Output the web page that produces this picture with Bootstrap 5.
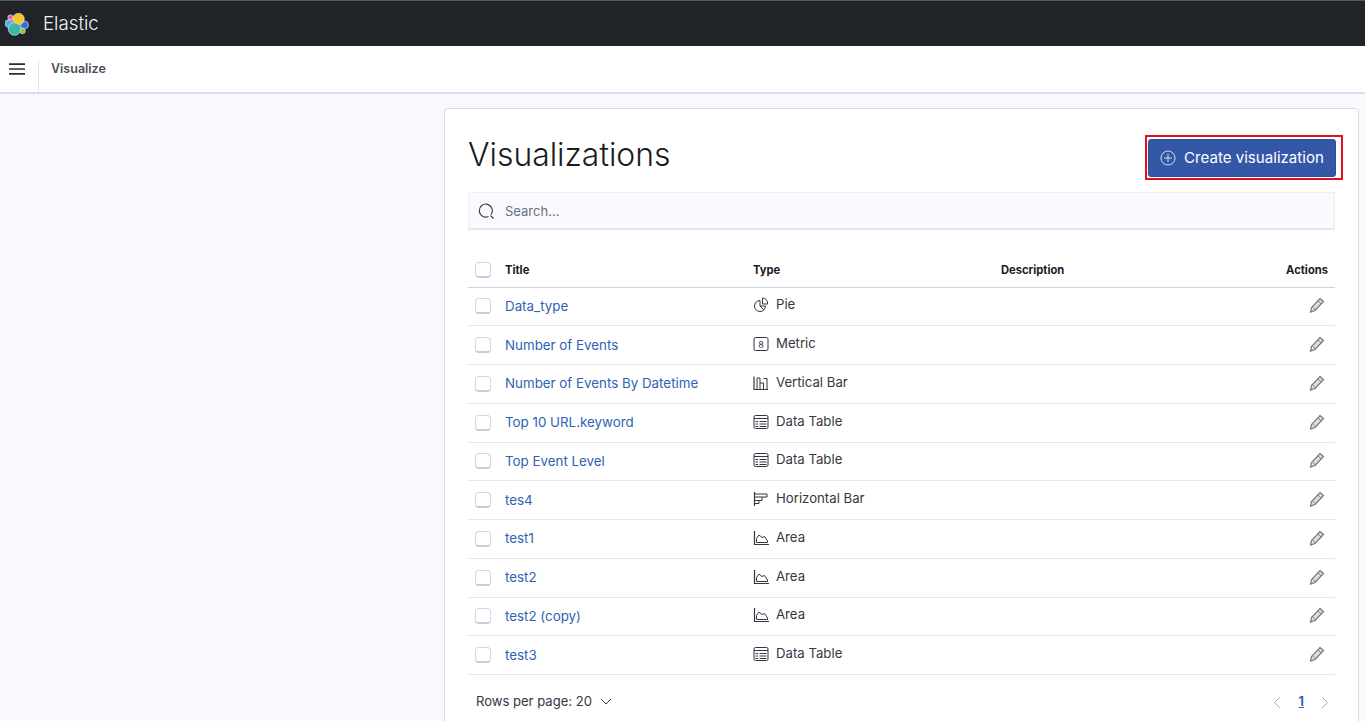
<!DOCTYPE html>
<html lang="en">
<head>
<meta charset="utf-8">
<title>Visualize - Elastic</title>
<link href="https://cdn.jsdelivr.net/npm/bootstrap@5.3.0/dist/css/bootstrap.min.css" rel="stylesheet">
<style>
html,body{height:721px;overflow:hidden}
body{background:#fafafe;font-family:Inter,"Liberation Sans",sans-serif;font-size:14px;color:#343741}
.topbar{height:46px;background:#202327;border-top:1px solid #55585c;color:#fff;padding:2px 0 0 5px}
.brand-name{font-size:18.7px;font-weight:300;margin-left:14px;color:#f2f3f4}
.crumbbar{height:48px;background:#fff;border-bottom:2px solid #d8dcec}
.menu-btn{width:39px;height:31px;border-right:1px solid #dfe3ee;padding:2px 0 0 9px;flex:none;align-self:flex-end}
.crumb{font-size:12.5px;font-weight:600;color:#4b4e58;margin-left:12px}
.side-gap{width:444px;flex:none}
.panel{width:915px;height:640px;margin-top:14px;background:#fff;border:1px solid #d5d9ec;border-radius:4px 4px 0 0;padding:0 23px;overflow:hidden}
.panel-head{height:83px;padding-top:26px}
.page-title{font-size:31.9px;line-height:40px;font-weight:300;color:#1a1c21;margin:0}
.cta-ring{border:2px solid #e3101c;margin:0 -8px 0 0;padding:2px 5px 1px 1px}
.cta{background:#3557a8;border:1px solid #2f4f9b;border-radius:3px;color:#fff;width:188px;height:38px;font-size:15.1px;font-weight:400;padding:0 11px;display:flex;align-items:center;gap:8px}
.cta:hover{background:#3557a8;color:#fff}
.search-box{height:38px;background:#fafafe;border:1px solid #eceef6;border-bottom:2px solid #e4e7f2;padding:2px 0 0 9px;gap:10px}
.search-input{border:0;background:transparent;outline:0;font-size:13px;color:#343741;flex:1;padding:0}
.search-input::placeholder{color:#69707d;opacity:1}
.vis-table{margin:20px 0 0;table-layout:fixed;width:100%;color:#343741;--bs-table-bg:transparent}
.vis-table th,.vis-table td{padding:0;border-bottom:1px solid #e3e7f1;vertical-align:middle}
.vis-table thead th{height:37px;padding-top:4px;font-size:11.2px;font-weight:700;color:#1a1c21;border-bottom:1px solid #cfd4e5}
.vis-table tbody td{height:38.75px;font-size:13.2px}
.col-check{width:37px;padding-left:7px!important}
.col-title{width:248px}
.col-type{width:248px}
.col-actions{width:100px;text-align:right;padding-right:7px!important}
.box{display:block;width:16px;height:16px;border:1px solid #d3d7e3;border-bottom:2px solid #c8ccd8;border-radius:4px;background:#fff}
.vis-link{color:#2f62b3;text-decoration:none;font-size:13.35px}
.type-cell{display:flex;align-items:center;gap:7px;margin-top:-2px}
.type-cell svg{flex:none}
.edit-ic{display:block;margin:-2px 3px 0 auto}
.pager{height:54px;padding-left:8px;font-size:13.05px;color:#343741}
.pg-num{color:#2f62b3;font-weight:700;text-decoration:underline;font-size:12.5px;margin:0 17px 0 18px}
</style>
</head>
<body>
<header class="topbar d-flex align-items-center">
  <svg width="24" height="24" viewBox="0 0 24 24" aria-label="Elastic logo" stroke="#fff" stroke-width=".5">
    <circle cx="5.500" cy="4.500" r="2.700" fill="#ef5a9c"/>
    <circle cx="4" cy="10.500" r="4" fill="#5aa7e8"/>
    <circle cx="19.500" cy="12" r="4" fill="#3c6fd8"/>
    <circle cx="13.500" cy="6" r="5.800" fill="#f7c531"/>
    <circle cx="17.500" cy="18" r="2.800" fill="#8fc53a"/>
    <circle cx="9.500" cy="16" r="6.300" fill="#3fb5ab"/>
  </svg>
  <span class="brand-name">Elastic</span>
</header>
<nav class="crumbbar d-flex align-items-center">
  <div class="menu-btn">
    <svg class="d-block" width="16" height="12" viewBox="0 0 16 12"><path d="M0 1.200h16M0 6h16M0 10.800h16" stroke="#2b2e35" stroke-width="1.700"/></svg>
  </div>
  <span class="crumb">Visualize</span>
</nav>
<div class="d-flex">
  <div class="side-gap"></div>
  <main class="panel">
    <div class="panel-head d-flex justify-content-between align-items-start">
      <h1 class="page-title">Visualizations</h1>
      <div class="cta-ring">
        <button class="btn cta" type="button">
          <svg width="16" height="16" viewBox="0 0 16 16" fill="none" stroke="#d9e0f0" stroke-width="1"><circle cx="8" cy="8" r="7"/><path d="M8 4v8M4 8h8"/></svg>
          Create visualization
        </button>
      </div>
    </div>
    <div class="search-box d-flex align-items-center">
      <svg width="17" height="17" viewBox="0 0 17 17" fill="none" stroke="#343741" stroke-width="1.100"><path d="M13 11.500A6.500 6.500 0 1 0 10.500 13.500"/><path d="M12.500 12.500l3 3"/></svg>
      <input class="search-input" type="text" placeholder="Search..." aria-label="Search">
    </div>
    <table class="table vis-table">
      <thead>
        <tr><th class="col-check"><span class="box"></span></th><th class="col-title">Title</th><th class="col-type">Type</th><th>Description</th><th class="col-actions">Actions</th></tr>
      </thead>
      <tbody id="rows"></tbody>
    </table>
    <div class="pager d-flex align-items-center justify-content-between">
      <div class="d-flex align-items-center gap-2">
        <span>Rows per page: 20</span>
        <svg width="12" height="8" viewBox="0 0 12 8" fill="none" stroke="#343741" stroke-width="1"><path d="M1 1l5 5 5-5"/></svg>
      </div>
      <div class="d-flex align-items-center" style="margin-right:6px">
        <svg width="8" height="13" viewBox="0 0 8 13" fill="none" stroke="#a5a9b3" stroke-width="1"><path d="M7 1L1.500 6.500 7 12"/></svg>
        <span class="pg-num">1</span>
        <svg width="8" height="13" viewBox="0 0 8 13" fill="none" stroke="#a5a9b3" stroke-width="1"><path d="M1 1l5.500 5.500L1 12"/></svg>
      </div>
    </div>
  </main>
</div>
<script>
var ic={
 Pie:'<path d="M7 3.500a5.500 5.500 0 1 0 5.500 5.500"/><path d="M7 3.500V9l3.800 3.800"/><path d="M7 9h5.500"/><path d="M9.500 1a5 5 0 0 1 5 5v1H9.500z"/>',
 Metric:'<rect x="1" y="1.500" width="14" height="13" rx="1.500"/><text x="8" y="11.500" text-anchor="middle" font-size="9" stroke="none" fill="#343741" font-family="Inter,sans-serif">8</text>',
 Bar:'<path d="M1 1.500v13h14" stroke-width="1.200"/><path d="M4 14V3h3v11M7 8h3.500v6M10.500 3.500H14V14"/>',
 Table:'<rect x="1" y="1.500" width="14" height="13" rx="1.500"/><path d="M1 4.500h14M2.500 7.500h2.500M6.500 7.500h7M2.500 10h2.500M6.500 10h7M2.500 12.500h2.500M6.500 12.500h7"/>',
 Horiz:'<path d="M1.500 1v14" stroke-width="1.200"/><path d="M1.500 3h12.500v3H1.500M9 6v3.500H6V12.500H1.500M1.500 9.500H6"/>',
 Area:'<path d="M1.500 1v13.500H16" stroke-width="1.200"/><path d="M3.500 12.500V8.500L6 5l3 2.500 2.500-1 3 4.500v1.500z"/>'
};
var data=[["Data_type","Pie","Pie"],["Number of Events","Metric","Metric"],["Number of Events By Datetime","Bar","Vertical Bar"],["Top 10 URL.keyword","Table","Data Table"],["Top Event Level","Table","Data Table"],["tes4","Horiz","Horizontal Bar"],["test1","Area","Area"],["test2","Area","Area"],["test2 (copy)","Area","Area"],["test3","Table","Data Table"]];
var pencil='<svg class="edit-ic" width="16" height="16" viewBox="0 0 16 16" fill="none" stroke="#75787f" stroke-width="1.200"><path d="M11 1.500l3.500 3-8.500 9-4.500 1.500 1-4.500z" fill="#dcdde0"/><path d="M4 10.500l3 2.800M9 4l3 2.800" stroke-width=".9"/></svg>';
document.getElementById('rows').innerHTML=data.map(function(r){
 return '<tr><td class="col-check"><span class="box"></span></td><td><a class="vis-link" href="#">'+r[0]+'</a></td><td><div class="type-cell"><svg width="16" height="16" viewBox="0 0 16 16" fill="none" stroke="#343741" stroke-width="1">'+ic[r[1]]+'</svg><span>'+r[2]+'</span></div></td><td></td><td class="col-actions">'+pencil+'</td></tr>';
}).join('');
</script>
</body>
</html>
